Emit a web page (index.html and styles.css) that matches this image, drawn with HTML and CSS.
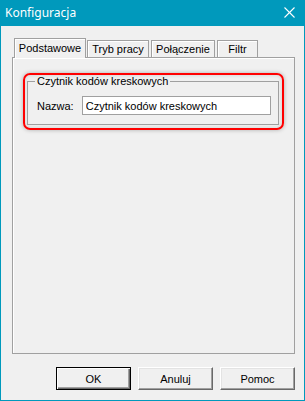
FILE: index.html
```html
<!DOCTYPE html>
<html lang="pl">
<head>
    <meta charset="UTF-8">
    <title>Konfiguracja</title>
    <link rel="stylesheet" href="styles.css">
</head>
<body>
    <div class="window">
        <div class="titlebar">
            <span class="title">Konfiguracja</span>
            <svg class="close" width="11" height="11" viewBox="0 0 11 11" fill="none" stroke="#ffffff" stroke-width="1.1">
                <path d="M0.5 0.5L10.5 10.5"></path>
                <path d="M10.5 0.5L0.5 10.5"></path>
            </svg>
        </div>

        <div class="client">
            <div class="tabs">
                <div class="tab tab-active tab-wide">Podstawowe</div>
                <div class="tab tab-mode">Tryb pracy</div>
                <div class="tab tab-conn">Połączenie</div>
                <div class="tab tab-filter">Filtr</div>
            </div>

            <div class="panel">
                <div class="highlight">
                    <fieldset class="group">
                        <legend>Czytnik kodów kreskowych</legend>
                        <div class="field">
                            <label for="name">Nazwa:</label>
                            <input id="name" class="name-input" type="text" value="Czytnik kodów kreskowych">
                        </div>
                    </fieldset>
                </div>
            </div>

            <div class="buttons">
                <button class="btn btn-default">OK</button>
                <button class="btn">Anuluj</button>
                <button class="btn">Pomoc</button>
            </div>
        </div>
    </div>
</body>
</html>
```

FILE: styles.css
```css
body {
    margin: 0;
    font-family: 'Liberation Sans', Arial, sans-serif;
    font-size: 11px;
    color: #000;
    background: #f0f0f0;
}

.window {
    width: 305px;
    height: 401px;
    box-sizing: border-box;
    border: 1px solid #0099bc;
    border-top: none;
    background: #f0f0f0;
    display: flex;
    flex-direction: column;
}

.titlebar {
    height: 26px;
    flex: none;
    background: #0099bc;
    display: flex;
    align-items: center;
    justify-content: space-between;
    padding: 0 9px 0 4px;
}

.title {
    font-family: 'Noto Sans', 'Open Sans', sans-serif;
    font-size: 12px;
    color: #ffffff;
    padding-bottom: 1px;
}

.close {
    display: block;
    margin-bottom: 1px;
}

.client {
    flex: 1;
    padding: 12px 9px 0 11px;
}

/* onglets */
.tabs {
    height: 19px;
    display: flex;
    align-items: flex-end;
    padding-left: 2px;
    gap: 1px;
}

.tab {
    box-sizing: border-box;
    height: 17px;
    border: 1px solid #a0a0a0;
    border-bottom: none;
    box-shadow: inset 1px 1px 0 #ffffff;
    text-align: center;
    line-height: 16px;
    background: #f0f0f0;
}

.tab-active {
    height: 20px;
    margin-bottom: -1px;
    position: relative;
    z-index: 1;
    line-height: 18px;
}

.tab-wide { width: 72px; }
.tab-mode { width: 62px; }
.tab-conn { width: 64px; margin-left: 1px; }
.tab-filter { width: 41px; margin-left: 1px; }

.panel {
    height: 297px;
    box-sizing: border-box;
    border: 1px solid #a0a0a0;
    box-shadow: inset 1px 1px 0 #ffffff;
    padding: 15px 10px 0 10px;
}

/* cadre rouge */
.highlight {
    border: 2px solid #ff0000;
    border-radius: 7px;
    padding: 0 4px 3px 2px;
    box-shadow: 0 0 4px rgba(0, 0, 0, 0.28), inset 0 0 4px rgba(0, 0, 0, 0.14);
}

.group {
    margin: 0;
    border: 1px solid #a0a0a0;
    padding: 8px 7px 9px 9px;
}

.group legend {
    padding: 0 2px;
    margin-left: -2px;
    line-height: 13px;
}

.field {
    display: flex;
    align-items: center;
    gap: 8px;
}

.name-input {
    width: 189px;
    height: 19px;
    box-sizing: border-box;
    margin: 0;
    border: 1px solid #a0a0a0;
    background: #ffffff;
    padding: 0 3px;
    font-family: 'Liberation Sans', Arial, sans-serif;
    font-size: 11px;
    color: #000;
}

.buttons {
    margin-top: 13px;
    display: flex;
    justify-content: flex-end;
    gap: 7px;
}

.btn {
    width: 75px;
    height: 23px;
    box-sizing: border-box;
    padding: 0;
    font-family: 'Liberation Sans', Arial, sans-serif;
    font-size: 11px;
    color: #000;
    background: #f0f0f0;
    border: 1px solid;
    border-color: #ffffff #696969 #696969 #ffffff;
    box-shadow: inset -1px -1px 0 #a0a0a0, inset 1px 1px 0 #e3e3e3;
}

.btn-default {
    border: 1px solid #000000;
    box-shadow: inset 1px 1px 0 #ffffff, inset -1px -1px 0 #696969, inset -2px -2px 0 #a0a0a0;
}
```
